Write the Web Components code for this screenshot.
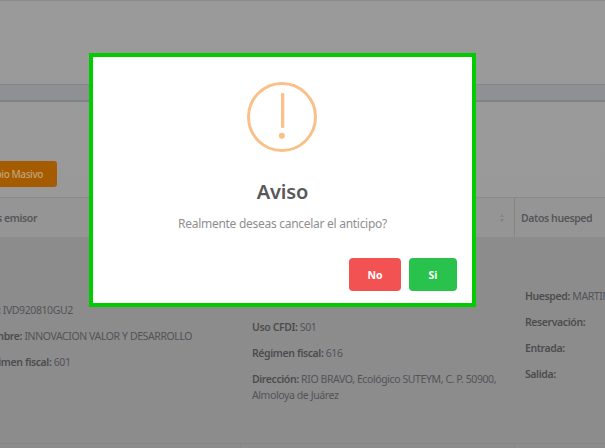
<!doctype html>
<html lang="es"><head><meta charset="utf-8">
<style>
html,body{margin:0;padding:0;height:100%;overflow:hidden;background:#999}
body{font-family:"Noto Sans","Open Sans",sans-serif}
</style></head>
<body>
<x-app></x-app>
<script>
function def(name, html){
  customElements.define(name, class extends HTMLElement{
    constructor(){super();this.attachShadow({mode:'open'}).innerHTML=html;}
  });
}
const FONT='"Noto Sans","Open Sans",sans-serif';
def('x-field',`<style>
:host{display:block;font:10.5px/16px ${FONT};letter-spacing:-.4px;color:#535358}
b{font-weight:600;color:#4c4c50}
</style><b><slot name="k"></slot></b> <slot></slot>`);
def('x-head-cell',`<style>
:host{display:flex;align-items:center;box-sizing:border-box;padding-left:6px;border-right:1px solid #858585;font:600 10.5px/16px ${FONT};letter-spacing:-.4px;color:#55555a;white-space:nowrap}
</style><slot></slot>`);
def('x-sort',`<style>
:host{display:flex;flex-direction:column;gap:2px;margin-left:auto;margin-right:10px}
i{display:block;width:0;height:0;border:2.5px solid transparent}
.u{border-bottom:3px solid #858585;border-top:0}
.d{border-top:3px solid #808080;border-bottom:0}
</style><i class="u"></i><i class="d"></i>`);
def('x-masivo',`<style>
:host{display:flex;align-items:center;justify-content:flex-end;box-sizing:border-box;width:100px;height:26px;margin-left:-43px;padding-right:14px;border-radius:3px;background:#a55c00;color:#c3a27a;font:500 10px/16px ${FONT};letter-spacing:-.4px;white-space:nowrap;overflow:hidden}
</style><slot></slot>`);
def('x-alert-button',`<style>
:host{display:flex;align-items:center;justify-content:center;height:33px;border-radius:4px;color:#fff;font:700 10.5px/14px ${FONT};background:var(--bg)}
</style><slot></slot>`);
def('x-alert',`<style>
:host{display:flex;flex-direction:column;box-sizing:border-box;width:387px;height:254px;border:4px solid #00cc00;background:#fff;position:absolute;left:89px;top:53px;align-items:center}
svg{display:block;margin:24px 0 0 -1px;flex:none}
h2{margin:27px 0 0;font:600 20px/24px ${FONT};letter-spacing:-.1px;color:#595959}
p{margin:11px 0 0;font:400 12px/18px ${FONT};letter-spacing:-.28px;color:#8f8f8f}
.a{display:flex;gap:8px;align-self:flex-end;margin:25px 15px 0 0}
.no{width:52px;--bg:#f25252}.si{width:48px;--bg:#28c24c}
</style>
<svg width="72" height="72" viewBox="0 0 72 72" fill="none">
<circle cx="36" cy="36" r="33.5" stroke="#fac08a" stroke-width="3"/>
<rect x="35" y="12" width="3.3" height="35" rx="1.2" fill="#fac08a"/>
<circle cx="35.8" cy="54.7" r="3" fill="#fac08a"/>
</svg>
<h2>Aviso</h2>
<p>Realmente deseas cancelar el anticipo?</p>
<div class="a"><x-alert-button class="no">No</x-alert-button><x-alert-button class="si">Si</x-alert-button></div>`);
def('x-app',`<style>
:host{display:block;position:relative;width:605px;height:448px;overflow:hidden;background:linear-gradient(#9a9a9a 0,#999 200px,#8d8d8d 240px,#8c8c8c 448px)}
.top{height:84px;box-sizing:border-box;border-top:1px solid #8a8c8f}
.band{height:18px;box-sizing:border-box;border-top:1px solid #83868b;border-bottom:2px solid #7f8287;background:#8e9094}
.gap{height:59px}
.bar{display:flex;height:36px}
.thead,.tbody,.tfoot{display:grid;grid-template-columns:241px 274px 100px;box-sizing:border-box}
.thead{height:40px;border-top:1px solid #8a8a8a;background:#959595;width:615px}
.thead x-head-cell:first-child{margin-left:-32px}
.tbody{height:206px;background:#8c8c8c}
.c1{margin-left:-20px;padding-top:65px;white-space:nowrap}
.c2{padding:82px 14px 0 11px}
.c3{padding:51px 0 0 10px;white-space:nowrap}
.c x-field+x-field{margin-top:10px}
.tfoot{height:5px;border-top:1px solid #868686;background:#8c8c8c}
.tfoot div{border-right:1px solid #868686}
</style>
<div class="top"></div>
<div class="band"></div>
<div class="gap"></div>
<div class="bar"><x-masivo>Cambio Masivo</x-masivo></div>
<div class="thead">
  <x-head-cell>Datos emisor</x-head-cell>
  <x-head-cell><x-sort></x-sort></x-head-cell>
  <x-head-cell>Datos huesped</x-head-cell>
</div>
<div class="tbody">
  <div class="c c1">
    <x-field><span slot="k">RFC:</span> IVD920810GU2</x-field>
    <x-field><span slot="k">Nombre:</span> INNOVACION VALOR Y DESARROLLO</x-field>
    <x-field><span slot="k">Régimen fiscal:</span> 601</x-field>
  </div>
  <div class="c c2">
    <x-field><span slot="k">Uso CFDI:</span> S01</x-field>
    <x-field><span slot="k">Régimen fiscal:</span> 616</x-field>
    <x-field><span slot="k">Dirección:</span> RIO BRAVO, Ecológico SUTEYM, C. P. 50900, Almoloya de Juárez</x-field>
  </div>
  <div class="c c3">
    <x-field><span slot="k">Huesped:</span> MARTIN</x-field>
    <x-field><span slot="k">Reservación:</span></x-field>
    <x-field><span slot="k">Entrada:</span></x-field>
    <x-field><span slot="k">Salida:</span></x-field>
  </div>
</div>
<div class="tfoot"><div></div><div></div><div></div></div>
<x-alert></x-alert>
`);
</script>
</body></html>
